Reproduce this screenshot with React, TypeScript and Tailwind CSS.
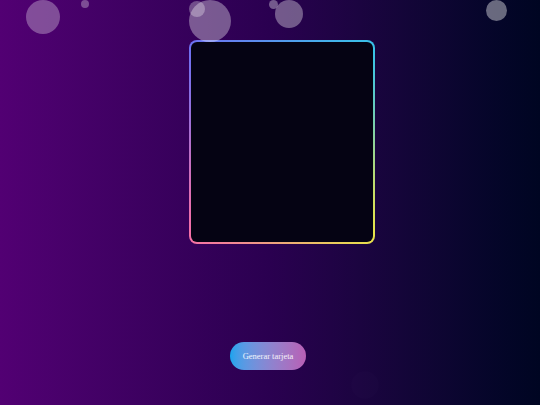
import React from "react";

export default function App() {
  return (
    <div className="relative w-[540px] h-[405px] overflow-hidden bg-gradient-to-r from-[#520073] via-[#2a0050] to-[#000522]">
      {/* bubbles */}
      <div className="absolute left-[26px] top-0 w-[34px] h-[34px] rounded-full bg-white/30" />
      <div className="absolute left-[81px] top-0 w-[8px] h-[8px] rounded-full bg-white/30" />
      <div className="absolute left-[189px] top-0 w-[42px] h-[42px] rounded-full bg-white/35" />
      <div className="absolute left-[189px] top-[1px] w-[16px] h-[16px] rounded-full bg-white/30" />
      <div className="absolute left-[275px] top-0 w-[28px] h-[28px] rounded-full bg-white/35" />
      <div className="absolute left-[269px] top-0 w-[9px] h-[9px] rounded-full bg-white/35" />
      <div className="absolute left-[486px] top-0 w-[21px] h-[21px] rounded-full bg-white/40" />
      <div className="absolute left-[351px] top-[371px] w-[28px] h-[28px] rounded-full bg-white/[0.012]" />

      <div className="flex flex-col items-center pt-[40px]">
        <div className="ml-[24px] w-[186px] h-[204px] rounded-[8px] p-[2px] bg-[conic-gradient(from_-45deg_at_50%_50%,#6f70f2,#38c3e8_25%,#e7e34a_50%,#f56fa8_75%,#6f70f2)]">
          <div className="w-full h-full rounded-[6px] bg-[#050313]" />
        </div>
        <button
          className="mt-[98px] ml-[-4px] w-[76px] h-[28px] rounded-full bg-gradient-to-r from-[#14a4ee] to-[#b85fb5] text-[8.5px] text-white/90"
          style={{ fontFamily: '"Liberation Serif", serif' }}
        >
          Generar tarjeta
        </button>
      </div>
    </div>
  );
}
